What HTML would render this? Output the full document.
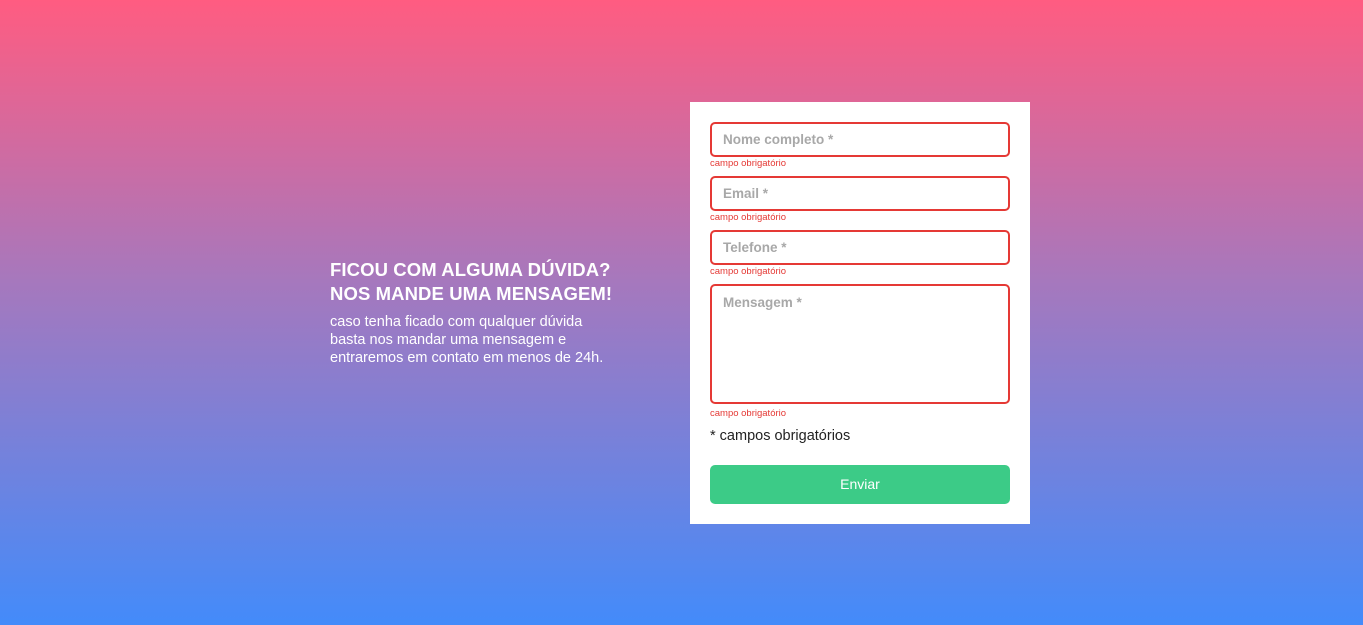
<!DOCTYPE html>
<html><head><meta charset="utf-8"><style>
*{box-sizing:border-box;margin:0;padding:0}
body{width:1363px;height:625px;overflow:hidden;font-family:"Liberation Sans",Arial,sans-serif;background:linear-gradient(to bottom,#ff5c81 0%,#a678bd 45%,#438bfa 100%);position:relative}
.left{position:absolute;left:330px;top:258px;color:#fff;width:300px}
.left h2{font-size:18.5px;font-weight:bold;line-height:24px;letter-spacing:0.1px;white-space:nowrap}
.left p{font-size:14.5px;line-height:18px;margin-top:7px;width:290px}
.card{position:absolute;left:690px;top:102px;width:340px;height:422px;background:#fff}
.f{position:absolute;left:20px;width:300px;border:2px solid #e53935;border-radius:5px;color:#a8a8a8;font-weight:bold;font-size:13.5px;padding-left:11px}
.e{position:absolute;left:20px;font-size:9.5px;color:#e53935}
.btn{position:absolute;left:20px;top:363px;width:300px;height:39px;background:#3ccb87;border-radius:5px;color:#fff;font-size:14px;text-align:center;line-height:39px}
</style></head><body>
<div class="left"><h2>FICOU COM ALGUMA DÚVIDA?<br>NOS MANDE UMA MENSAGEM!</h2>
<p>caso tenha ficado com qualquer dúvida<br>basta nos mandar uma mensagem e<br>entraremos em contato em menos de 24h.</p></div>
<div class="card">
<div class="f" style="top:20px;height:35px;line-height:31px">Nome completo *</div>
<div class="e" style="top:56px">campo obrigatório</div>
<div class="f" style="top:74px;height:35px;line-height:31px">Email *</div>
<div class="e" style="top:110px">campo obrigatório</div>
<div class="f" style="top:128px;height:35px;line-height:31px">Telefone *</div>
<div class="e" style="top:164px">campo obrigatório</div>
<div class="f" style="top:182px;height:120px;padding-top:9px">Mensagem *</div>
<div class="e" style="top:306px">campo obrigatório</div>
<div style="position:absolute;left:20px;top:326px;font-size:14.5px;color:#222">* campos obrigatórios</div>
<div class="btn">Enviar</div>
</div>
</body></html>
